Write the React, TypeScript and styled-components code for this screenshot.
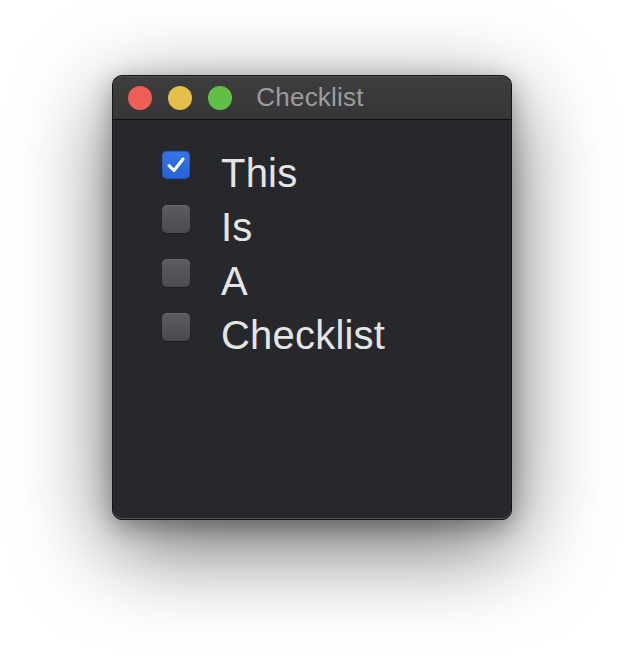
import React, { useState } from 'react';
import styled, { createGlobalStyle } from 'styled-components';

const GlobalStyle = createGlobalStyle`
  html, body {
    margin: 0;
    padding: 0;
    background: #ffffff;
  }
  body {
    font-family: "Liberation Sans", Arial, Helvetica, sans-serif;
  }
`;

const Page = styled.div`
  width: 624px;
  height: 668px;
  box-sizing: border-box;
  padding: 75px 0 0 112px;
  overflow: hidden;
`;

const Window = styled.div`
  width: 400px;
  height: 445px;
  box-sizing: border-box;
  display: flex;
  flex-direction: column;
  border-radius: 10px;
  background: #27282c;
  border: 1px solid #141416;
  overflow: hidden;
  box-shadow:
    0 26px 90px rgba(0, 0, 0, 0.6),
    0 6px 24px rgba(0, 0, 0, 0.3),
    inset 0 -1px 0 #55565a;
`;

const TitleBar = styled.div`
  height: 43px;
  flex-shrink: 0;
  display: grid;
  grid-template-columns: 1fr auto 1fr;
  align-items: center;
  padding: 0 15px;
  background: linear-gradient(#3e3e40, #363638);
  border-bottom: 1px solid #121214;
  box-shadow: inset 0 1px 0 #545456;
`;

const Lights = styled.div`
  display: flex;
  gap: 16px;
  align-items: center;
`;

const Light = styled.span<{ $color: string }>`
  width: 24px;
  height: 24px;
  border-radius: 50%;
  background: ${({ $color }) => $color};
`;

const Title = styled.div`
  font-size: 26px;
  color: #9c9c9e;
  letter-spacing: 0.2px;
  margin-right: 4px;
`;

const Body = styled.div`
  flex: 1;
  padding: 26px 0 0 49px;
`;

const List = styled.div`
  display: flex;
  flex-direction: column;
`;

const Row = styled.label`
  display: flex;
  align-items: flex-start;
  height: 54px;
  gap: 31px;
  cursor: default;
`;

const Box = styled.span<{ $checked: boolean }>`
  width: 28px;
  height: 28px;
  margin-top: 5px;
  box-sizing: border-box;
  border-radius: 5px;
  display: flex;
  align-items: center;
  justify-content: center;
  background: ${({ $checked }) =>
    $checked
      ? 'linear-gradient(#3574e6, #2a63d4)'
      : 'linear-gradient(#5c5d61, #4a4b4f)'};
  box-shadow: ${({ $checked }) =>
    $checked
      ? 'inset 0 0 0 1px rgba(20, 60, 150, 0.4)'
      : 'inset 0 1px 0 rgba(255,255,255,0.08), 0 1px 1px rgba(0,0,0,0.3)'};
`;

const Label = styled.span`
  font-size: 40px;
  line-height: 54px;
  letter-spacing: 0.2px;
  color: #e5e5e7;
`;

const Check = () => (
  <svg width="22" height="22" viewBox="0 0 22 22" fill="none">
    <path
      d="M4 11.5 L9 16.5 L18 5"
      stroke="#ffffff"
      strokeWidth="3"
      strokeLinecap="round"
      strokeLinejoin="round"
    />
  </svg>
);

const items = ['This', 'Is', 'A', 'Checklist'];

export default function App() {
  const [checked, setChecked] = useState<boolean[]>([true, false, false, false]);

  const toggle = (i: number) =>
    setChecked(prev => prev.map((v, j) => (j === i ? !v : v)));

  return (
    <>
      <GlobalStyle />
      <Page>
        <Window>
          <TitleBar>
            <Lights>
              <Light $color="#ee5f57" />
              <Light $color="#e3bf4a" />
              <Light $color="#62bf45" />
            </Lights>
            <Title>Checklist</Title>
            <div />
          </TitleBar>
          <Body>
            <List>
              {items.map((item, i) => (
                <Row key={item} onClick={() => toggle(i)}>
                  <Box $checked={checked[i]}>{checked[i] && <Check />}</Box>
                  <Label>{item}</Label>
                </Row>
              ))}
            </List>
          </Body>
        </Window>
      </Page>
    </>
  );
}
